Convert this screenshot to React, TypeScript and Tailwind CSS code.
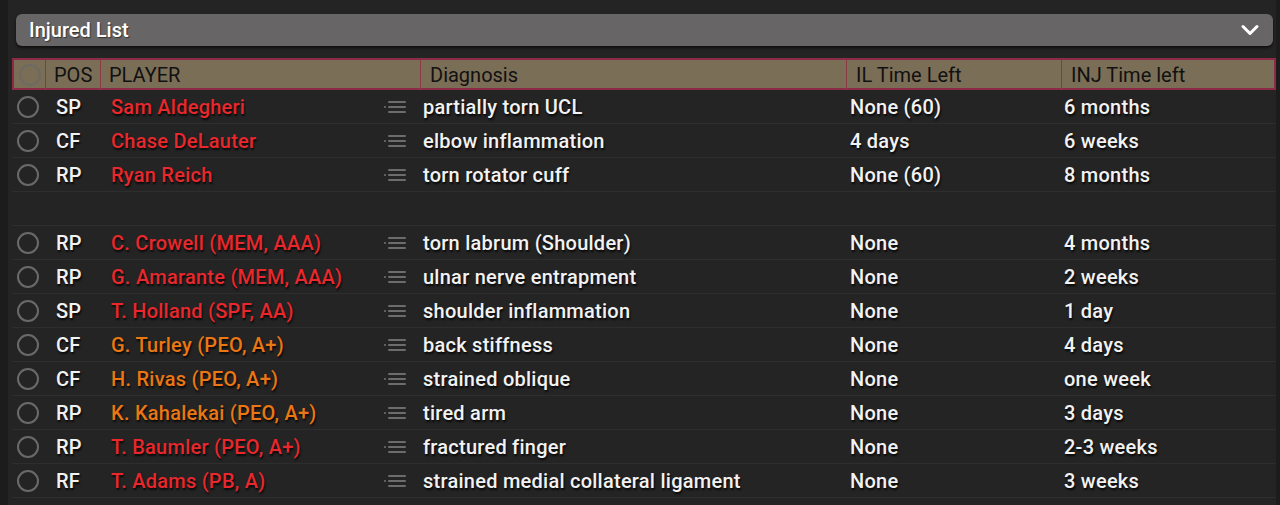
import { ChevronDown } from 'lucide-react'

type Row = {
  pos: string
  name: string
  tone: 'red' | 'orange'
  diagnosis: string
  il: string
  inj: string
}

const rows: (Row | null)[] = [
  { pos: 'SP', name: 'Sam Aldegheri', tone: 'red', diagnosis: 'partially torn UCL', il: 'None (60)', inj: '6 months' },
  { pos: 'CF', name: 'Chase DeLauter', tone: 'red', diagnosis: 'elbow inflammation', il: '4 days', inj: '6 weeks' },
  { pos: 'RP', name: 'Ryan Reich', tone: 'red', diagnosis: 'torn rotator cuff', il: 'None (60)', inj: '8 months' },
  null,
  { pos: 'RP', name: 'C. Crowell (MEM, AAA)', tone: 'red', diagnosis: 'torn labrum (Shoulder)', il: 'None', inj: '4 months' },
  { pos: 'RP', name: 'G. Amarante (MEM, AAA)', tone: 'red', diagnosis: 'ulnar nerve entrapment', il: 'None', inj: '2 weeks' },
  { pos: 'SP', name: 'T. Holland (SPF, AA)', tone: 'red', diagnosis: 'shoulder inflammation', il: 'None', inj: '1 day' },
  { pos: 'CF', name: 'G. Turley (PEO, A+)', tone: 'orange', diagnosis: 'back stiffness', il: 'None', inj: '4 days' },
  { pos: 'CF', name: 'H. Rivas (PEO, A+)', tone: 'orange', diagnosis: 'strained oblique', il: 'None', inj: 'one week' },
  { pos: 'RP', name: 'K. Kahalekai (PEO, A+)', tone: 'orange', diagnosis: 'tired arm', il: 'None', inj: '3 days' },
  { pos: 'RP', name: 'T. Baumler (PEO, A+)', tone: 'red', diagnosis: 'fractured finger', il: 'None', inj: '2-3 weeks' },
  { pos: 'RF', name: 'T. Adams (PB, A)', tone: 'red', diagnosis: 'strained medial collateral ligament', il: 'None', inj: '3 weeks' },
]

const grid = 'grid grid-cols-[32px_55px_320px_426px_215px_216px]'

function ListIcon() {
  return (
    <svg width="24" height="16" viewBox="0 0 24 16" className="shrink-0">
      <rect x="0" y="7" width="2" height="2" fill="#5f5f5f" />
      <rect x="4" y="2" width="18" height="2" rx="1" fill="#6c6c6c" />
      <rect x="4" y="7" width="18" height="2" rx="1" fill="#6c6c6c" />
      <rect x="4" y="12" width="18" height="2" rx="1" fill="#6c6c6c" />
    </svg>
  )
}

export default function App() {
  return (
    <div className="h-[505px] w-[1280px] overflow-hidden bg-[#1c1c1c] font-['Roboto',sans-serif]">
      <div className="ml-2 mr-1 h-full bg-[#242424] pt-[14px] pl-1">
        <div className="ml-1 mr-[3px] flex h-8 items-center justify-between rounded-md bg-[#686567] pl-[13px] pr-[9px] shadow-[0_2px_3px_rgba(0,0,0,0.6)]">
          <span className="text-[20px] font-medium text-white [text-shadow:1px_1px_1px_rgba(0,0,0,0.5)]">Injured List</span>
          <ChevronDown className="h-7 w-7 text-white" strokeWidth={2.6} />
        </div>

        <div className="mt-3 w-[1264px]">
          <div className={`${grid} h-8 border-2 border-[#8c2b47] bg-[#7a6e56] text-[20px] text-[#111]`}>
            <div className="flex items-center justify-center border-r border-[#8a3a45]">
              <span className="h-[22px] w-[22px] rounded-full border-2 border-[#6e6a63]" />
            </div>
            <div className="flex items-center border-r border-[#8a3a45] pl-[8px]">POS</div>
            <div className="flex items-center border-r border-[#8a3a45] pl-[8px]">PLAYER</div>
            <div className="flex items-center border-r border-[#8a3a45] pl-[9px]">Diagnosis</div>
            <div className="flex items-center border-r border-[#8a3a45] pl-[9px]">IL Time Left</div>
            <div className="flex items-center pl-[9px]">INJ Time left</div>
          </div>

          {rows.map((row, i) =>
            row ? (
              <div
                key={i}
                className={`${grid} h-[34px] border-b border-[#2e2e2e] text-[20px] font-medium tracking-[0.25px] text-[#f2f2f2] [text-shadow:1px_2px_2px_rgba(0,0,0,0.8)]`}
              >
                <div className="flex items-center justify-center">
                  <span className="h-[22px] w-[22px] rounded-full border-2 border-[#6a6a6a]" />
                </div>
                <div className="flex items-center pl-[12px]">{row.pos}</div>
                <div className="flex items-center justify-between pl-[12px] pr-[11px]">
                  <span className={row.tone === 'red' ? 'text-[#e8282c]' : 'text-[#ea7714]'}>{row.name}</span>
                  <ListIcon />
                </div>
                <div className="flex items-center pl-[4px]">{row.diagnosis}</div>
                <div className="flex items-center pl-[5px]">{row.il}</div>
                <div className="flex items-center pl-[4px]">{row.inj}</div>
              </div>
            ) : (
              <div key={i} className="h-[34px] border-b border-[#2e2e2e]" />
            ),
          )}
        </div>
      </div>
    </div>
  )
}
